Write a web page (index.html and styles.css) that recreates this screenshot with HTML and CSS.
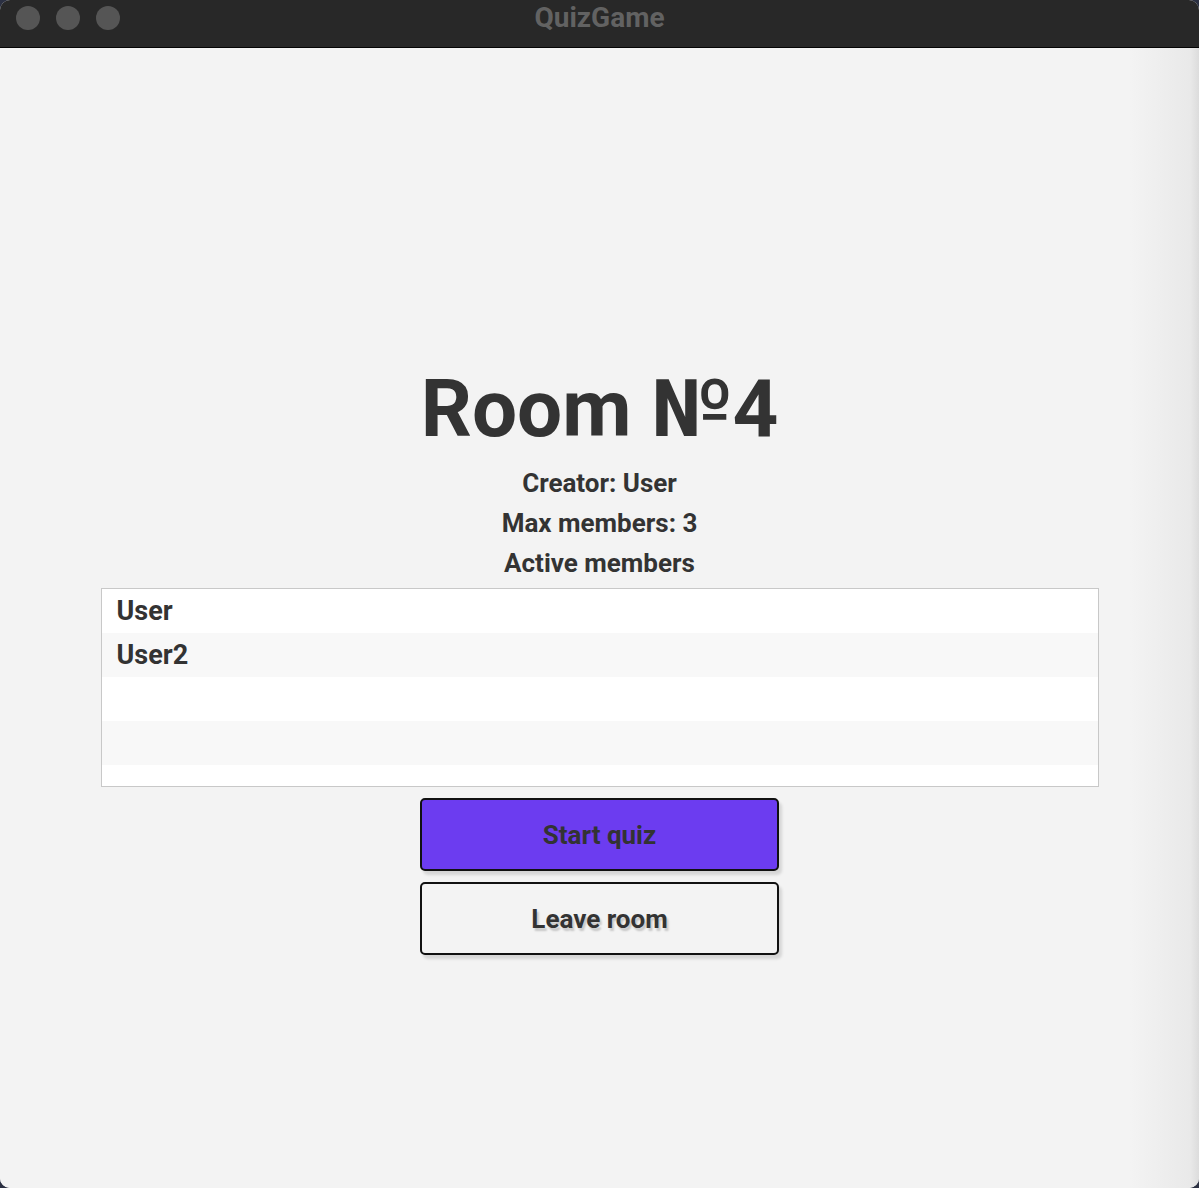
FILE: index.html
```html
<!DOCTYPE html>
<html>
<head>
<meta charset="utf-8">
<link rel="stylesheet" href="styles.css">
</head>
<body>
<div class="window">
  <div class="titlebar">
    <div class="lights">
      <span class="light"></span>
      <span class="light"></span>
      <span class="light"></span>
    </div>
    <div class="wtitle">QuizGame</div>
  </div>
  <div class="content">
    <h1 class="room">Room №4</h1>
    <div class="info">Creator: User</div>
    <div class="info">Max members: 3</div>
    <div class="info">Active members</div>
    <div class="list">
      <div class="row">User</div>
      <div class="row alt">User2</div>
      <div class="row"></div>
      <div class="row alt"></div>
      <div class="row tail"></div>
    </div>
    <button class="btn primary">Start quiz</button>
    <button class="btn secondary">Leave room</button>
  </div>
</div>
</body>
</html>
```
FILE: styles.css
```css
html, body {
  margin: 0;
  padding: 0;
  height: 100%;
}
body {
  background: #2b3042;
  font-family: Roboto, "Noto Sans", sans-serif;
  overflow: hidden;
}
.window {
  width: 1199px;
  height: 1188px;
  border-radius: 10px;
  overflow: hidden;
  display: flex;
  flex-direction: column;
  background: #f3f3f3;
}
.titlebar {
  height: 47px;
  background: #282828;
  border-bottom: 1px solid #050505;
  position: relative;
  display: flex;
  align-items: center;
  justify-content: center;
  flex: none;
}
.lights {
  position: absolute;
  left: 16px;
  top: 6px;
  display: flex;
  gap: 16px;
}
.light {
  width: 24px;
  height: 24px;
  border-radius: 50%;
  background: #555555;
}
.wtitle {
  color: #626262;
  font-weight: 700;
  font-size: 28px;
  margin-top: -12px;
}
.content {
  flex: 1;
  display: flex;
  flex-direction: column;
  align-items: center;
  padding-top: 314px;
  background: linear-gradient(to right, #f3f3f3 0, #f3f3f3 1130px, #e9e9e9 1190px, #dcdcdc 1199px);
}
.room {
  margin: 0;
  font-size: 80px;
  font-weight: 700;
  color: #333333;
  line-height: 94px;
}
.info {
  font-size: 26px;
  font-weight: 700;
  color: #333333;
  line-height: 40px;
}
.info:first-of-type {
  margin-top: 7px;
}
.list {
  margin-top: 5px;
  width: 996px;
  height: 197px;
  border: 1px solid #c8c8c8;
  background: #ffffff;
  overflow: hidden;
}
.row {
  height: 44px;
  line-height: 44px;
  padding-left: 15px;
  font-size: 27px;
  font-weight: 700;
  color: #333333;
  background: #ffffff;
}
.row.alt {
  background: #f8f8f8;
}
.btn {
  width: 359px;
  height: 73px;
  border: 2px solid #111111;
  border-radius: 5px;
  font-family: Roboto, "Noto Sans", sans-serif;
  font-size: 26px;
  font-weight: 700;
  color: #333333;
  box-shadow: 3px 4px 3px rgba(0, 0, 0, 0.12);
  padding: 0;
}
.primary {
  margin-top: 11px;
  background: #6c3cf0;
}
.secondary {
  margin-top: 11px;
  background: #f3f3f3;
  text-shadow: 2px 3px 2px rgba(0, 0, 0, 0.18);
}
```
